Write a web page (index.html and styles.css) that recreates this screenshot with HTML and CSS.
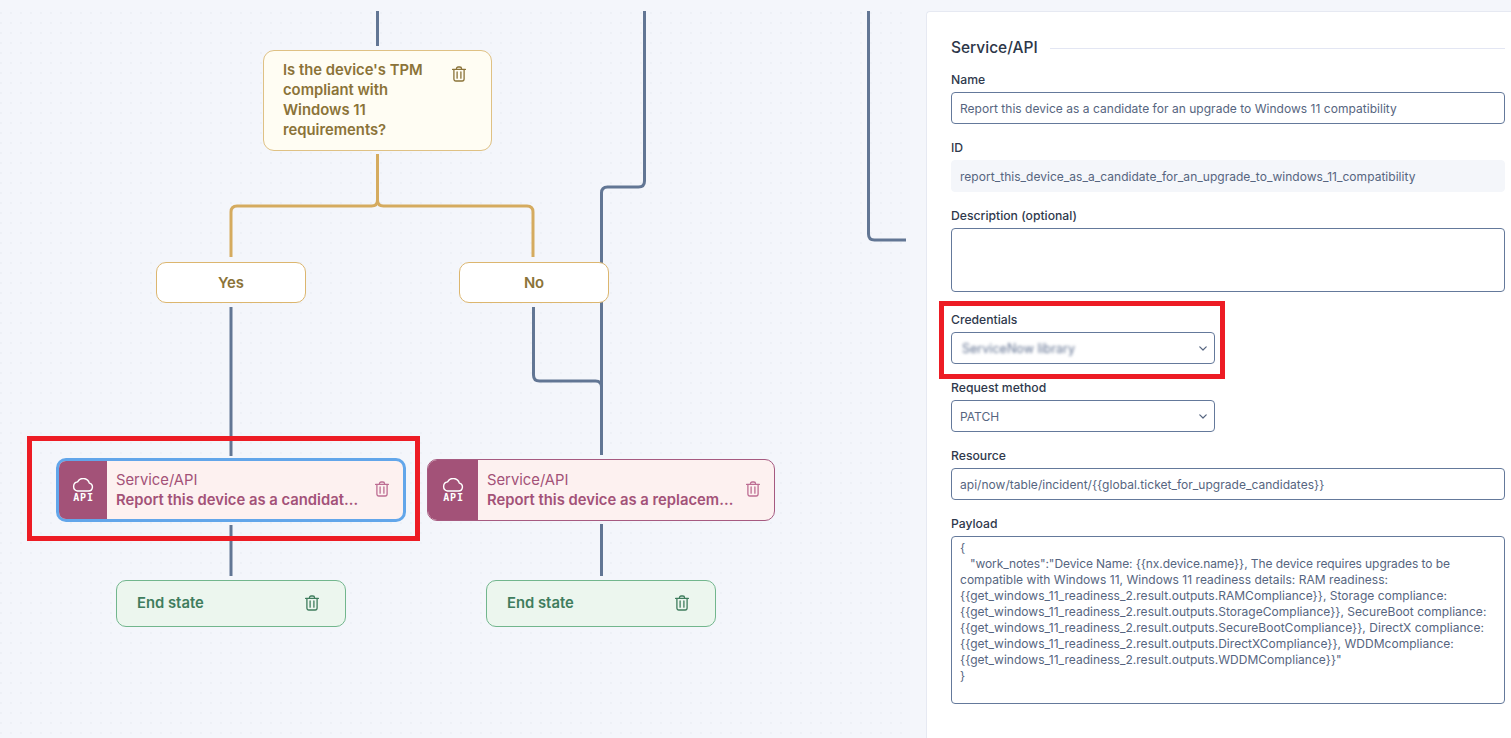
FILE: index.html
```html
<!DOCTYPE html>
<html lang="en">
<head>
<meta charset="utf-8">
<title>Service/API workflow</title>
<link rel="stylesheet" href="styles.css">
</head>
<body>
<svg class="defs" width="0" height="0" aria-hidden="true">
  <symbol id="trash" viewBox="0 0 16 16">
    <path d="M5.5 3V2.6A1.6 1.6 0 0 1 7.1 1h1.8a1.6 1.6 0 0 1 1.6 1.6V3M1.6 3.4h12.8M2.9 3.4v9.7A1.9 1.9 0 0 0 4.8 15h6.4a1.9 1.9 0 0 0 1.9-1.9V3.4M6.1 6v6.2M9.9 6v6.2" fill="none" stroke="currentColor" stroke-width="1.3" stroke-linecap="round" stroke-linejoin="round"/>
  </symbol>
  <symbol id="cloud" viewBox="0 0 22 14">
    <path d="M5.5 13h11a4 4 0 0 0 .8-7.9A6.3 6.3 0 0 0 5.6 3.9 4.6 4.6 0 0 0 5.5 13Z" fill="none" stroke="currentColor" stroke-width="1.4" stroke-linejoin="round"/>
  </symbol>
  <symbol id="chev" viewBox="0 0 8 5">
    <path d="M.8.9 4 4 7.2.9" fill="none" stroke="currentColor" stroke-width="1.2" stroke-linecap="round" stroke-linejoin="round"/>
  </symbol>
</svg>

<main class="canvas">
  <svg class="wires" width="906" height="727" viewBox="0 11 906 727" aria-hidden="true">
    <g class="wire-blue">
      <path d="M377.5 11V46"/>
      <path d="M644.5 11V181q0 6-6 6H607.5q-6 0-6 6V455"/>
      <path d="M868.5 11V234q0 6 6 6H906"/>
      <path d="M231 307V456"/>
      <path d="M231 525V576"/>
      <path d="M533.5 307V375q0 6 6 6H595.5q6 0 6 6"/>
      <path d="M601.5 524V576"/>
    </g>
    <g class="wire-gold">
      <path d="M377.5 154V200q0 6-6 6H237q-6 0-6 6V257"/>
      <path d="M377.5 200q0 6 6 6H527q6 0 6 6V257"/>
    </g>
  </svg>

  <div class="node decision">
    <p class="decision-text">Is the device's TPM compliant with Windows 11 requirements?</p>
    <svg class="trash"><use href="#trash"/></svg>
  </div>

  <div class="node branch branch-yes">Yes</div>
  <div class="node branch branch-no">No</div>

  <div class="node service service-a is-selected">
    <div class="service-icon">
      <svg class="cloud"><use href="#cloud"/></svg>
      <span class="api-label">API</span>
    </div>
    <div class="service-body">
      <div class="service-kind">Service/API</div>
      <div class="service-name">Report this device as a candidat…</div>
    </div>
    <svg class="trash"><use href="#trash"/></svg>
  </div>

  <div class="node service service-b">
    <div class="service-icon">
      <svg class="cloud"><use href="#cloud"/></svg>
      <span class="api-label">API</span>
    </div>
    <div class="service-body">
      <div class="service-kind">Service/API</div>
      <div class="service-name">Report this device as a replacem…</div>
    </div>
    <svg class="trash"><use href="#trash"/></svg>
  </div>

  <div class="node end end-a"><span>End state</span><svg class="trash"><use href="#trash"/></svg></div>
  <div class="node end end-b"><span>End state</span><svg class="trash"><use href="#trash"/></svg></div>
</main>

<aside class="panel">
  <header class="panel-head">
    <h2 class="panel-title">Service/API</h2>
    <span class="panel-rule"></span>
  </header>

  <div class="field">
    <label class="label">Name</label>
    <div class="control">Report this device as a candidate for an upgrade to Windows 11 compatibility</div>
  </div>
  <div class="field">
    <label class="label">ID</label>
    <div class="control control-readonly">report_this_device_as_a_candidate_for_an_upgrade_to_windows_11_compatibility</div>
  </div>
  <div class="field field-tall">
    <label class="label">Description (optional)</label>
    <div class="control control-area"></div>
  </div>
  <div class="field">
    <label class="label">Credentials</label>
    <div class="control control-select"><span class="blurred">ServiceNow library</span><svg class="chev"><use href="#chev"/></svg></div>
  </div>
  <div class="field">
    <label class="label">Request method</label>
    <div class="control control-select"><span>PATCH</span><svg class="chev"><use href="#chev"/></svg></div>
  </div>
  <div class="field">
    <label class="label">Resource</label>
    <div class="control">api/now/table/incident/{{global.ticket_for_upgrade_candidates}}</div>
  </div>
  <div class="field">
    <label class="label">Payload</label>
    <div class="control control-code">
      <div>{</div>
      <div class="code-first">   "work_notes":"Device Name: {{nx.device.name}}, The device requires upgrades to be</div>
      <div>compatible with Windows 11, Windows 11 readiness details: RAM readiness: {{get_windows_11_readiness_2.result.outputs.RAMCompliance}}, Storage compliance: {{get_windows_11_readiness_2.result.outputs.StorageCompliance}}, SecureBoot compliance: {{get_windows_11_readiness_2.result.outputs.SecureBootCompliance}}, DirectX compliance: {{get_windows_11_readiness_2.result.outputs.DirectXCompliance}}, WDDMcompliance: {{get_windows_11_readiness_2.result.outputs.WDDMCompliance}}"</div>
      <div>}</div>
    </div>
  </div>
</aside>

<div class="callout callout-node"></div>
<div class="callout callout-field"></div>
</body>
</html>
```
FILE: styles.css
```css
* { box-sizing: border-box; }

html, body { height: 100%; }

body {
  margin: 0;
  display: flex;
  height: 738px;
  overflow: hidden;
  position: relative;
  background: #f4f6fb;
  font-family: Inter, "Liberation Sans", sans-serif;
  color: #2c3648;
}

.defs { position: absolute; }

/* Canvas */
.canvas {
  position: relative;
  flex: 0 0 906px;
  margin-top: 11px;
  height: 727px;
  overflow: hidden;
  background-image: radial-gradient(circle, #e8ebf1 0.5px, transparent 0.9px);
  background-size: 10px 10px;
  background-position: -4px -3px;
}

.wires { position: absolute; left: 0; top: 0; }
.wires path { fill: none; stroke-width: 3; }
.wire-blue path { stroke: #627694; }
.wire-gold path { stroke: #d5ab5f; }

.node { position: absolute; }

.trash { width: 16px; height: 16px; flex: none; }

.decision {
  left: 263px;
  top: 39px;
  width: 229px;
  height: 101px;
  padding: 9px 19px;
  display: flex;
  align-items: flex-start;
  background: #fffdf3;
  border: 1px solid #dfc184;
  border-radius: 11px;
  color: #8b7338;
}
.decision-text {
  margin: 0;
  width: 150px;
  font-size: 14.8px;
  font-weight: 600;
  line-height: 20px;
}
.decision .trash { margin: 6px 0 0 18px; }

.branch {
  top: 251px;
  width: 150px;
  height: 41px;
  display: flex;
  align-items: center;
  justify-content: center;
  background: #fff;
  border: 1px solid #dcb66f;
  border-radius: 10px;
  font-size: 14.8px;
  font-weight: 600;
  color: #8b7338;
}
.branch-yes { left: 156px; }
.branch-no { left: 459px; }

.service {
  top: 448px;
  height: 62px;
  display: flex;
  align-items: center;
  overflow: hidden;
  background: #fdf1f0;
  border: 1px solid #a65a80;
  border-radius: 10px;
  color: #a35278;
}
.service-a { left: 56px; width: 350px; top: 447px; height: 64px; }
.service-b { left: 427px; width: 348px; }
.service.is-selected { border: 3px solid #62a6ea; }

.service-icon {
  flex: none;
  align-self: stretch;
  width: 50px;
  display: flex;
  flex-direction: column;
  align-items: center;
  justify-content: center;
  background: #a35278;
  color: #fff;
}
.is-selected .service-icon { width: 48px; }
.cloud { width: 22px; height: 14px; }
.api-label {
  margin-top: 1px;
  font-family: "DejaVu Sans Mono", monospace;
  font-size: 10px;
  font-weight: 700;
  line-height: 9px;
  letter-spacing: 0.8px;
  margin-right: -1px;
}

.service-body { flex: 1; min-width: 0; padding: 0 11px 0 9px; }
.service-kind { font-size: 14.8px; line-height: 20px; }
.service-name {
  font-size: 14.8px;
  font-weight: 600;
  line-height: 21px;
  white-space: nowrap;
}
.service .trash { margin: 0 13px 2px 0; color: #bd6d93; }

.end {
  top: 569px;
  width: 230px;
  height: 47px;
  padding: 0 25px 2px 20px;
  display: flex;
  align-items: center;
  justify-content: space-between;
  background: #ecf6ee;
  border: 1px solid #72b68d;
  border-radius: 10px;
  font-size: 14.8px;
  font-weight: 600;
  color: #3f7d5d;
}
.end-a { left: 116px; }
.end-b { left: 486px; }

/* Side panel */
.panel {
  flex: 1;
  margin: 11px 0 0 20px;
  padding: 26px 6px 0 24px;
  background: #fff;
  border: 1px solid #e6e9f2;
  border-right: 0;
  border-bottom: 0;
  border-top-left-radius: 4px;
}

.panel-head {
  display: flex;
  align-items: center;
  gap: 12px;
  height: 20px;
  margin-bottom: 15px;
}
.panel-title {
  margin: 0;
  font-size: 15.5px;
  font-weight: 500;
  line-height: 20px;
}
.panel-rule { flex: 1; height: 1px; background: #e3e6f3; }

.field { margin-bottom: 17px; }
.field-tall { margin-bottom: 21px; }

.label {
  display: block;
  height: 14px;
  margin-bottom: 5px;
  font-size: 12.2px;
  font-weight: 500;
  line-height: 14px;
  color: #2f394c;
}

.control {
  height: 32px;
  padding: 1px 8px 0;
  display: flex;
  align-items: center;
  background: #fff;
  border: 1px solid #64799b;
  border-radius: 4px;
  font-size: 12px;
  letter-spacing: 0.03px;
  color: #566580;
  white-space: nowrap;
}
.control-readonly { background: #f4f6fa; border-color: #f4f6fa; }
.control-area { height: 64px; }
.control-select {
  width: 264px;
  justify-content: space-between;
  padding-right: 7px;
}
.chev { width: 8px; height: 5px; color: #566580; }
.blurred { filter: blur(1.4px); padding-left: 2px; color: #5f7090; font-size: 12.5px; }
.control-code {
  display: block;
  height: 168px;
  padding: 3px 8px;
  line-height: 16px;
  white-space: normal;
}
.code-first { white-space: pre; letter-spacing: -0.08px; }

/* Red annotation frames drawn over the screenshot */
.callout {
  position: absolute;
  border: 5px solid #ed1c24;
  pointer-events: none;
}
.callout-node { left: 27px; top: 436px; width: 393px; height: 105px; }
.callout-field { left: 939px; top: 301px; width: 286px; height: 78px; }
```
